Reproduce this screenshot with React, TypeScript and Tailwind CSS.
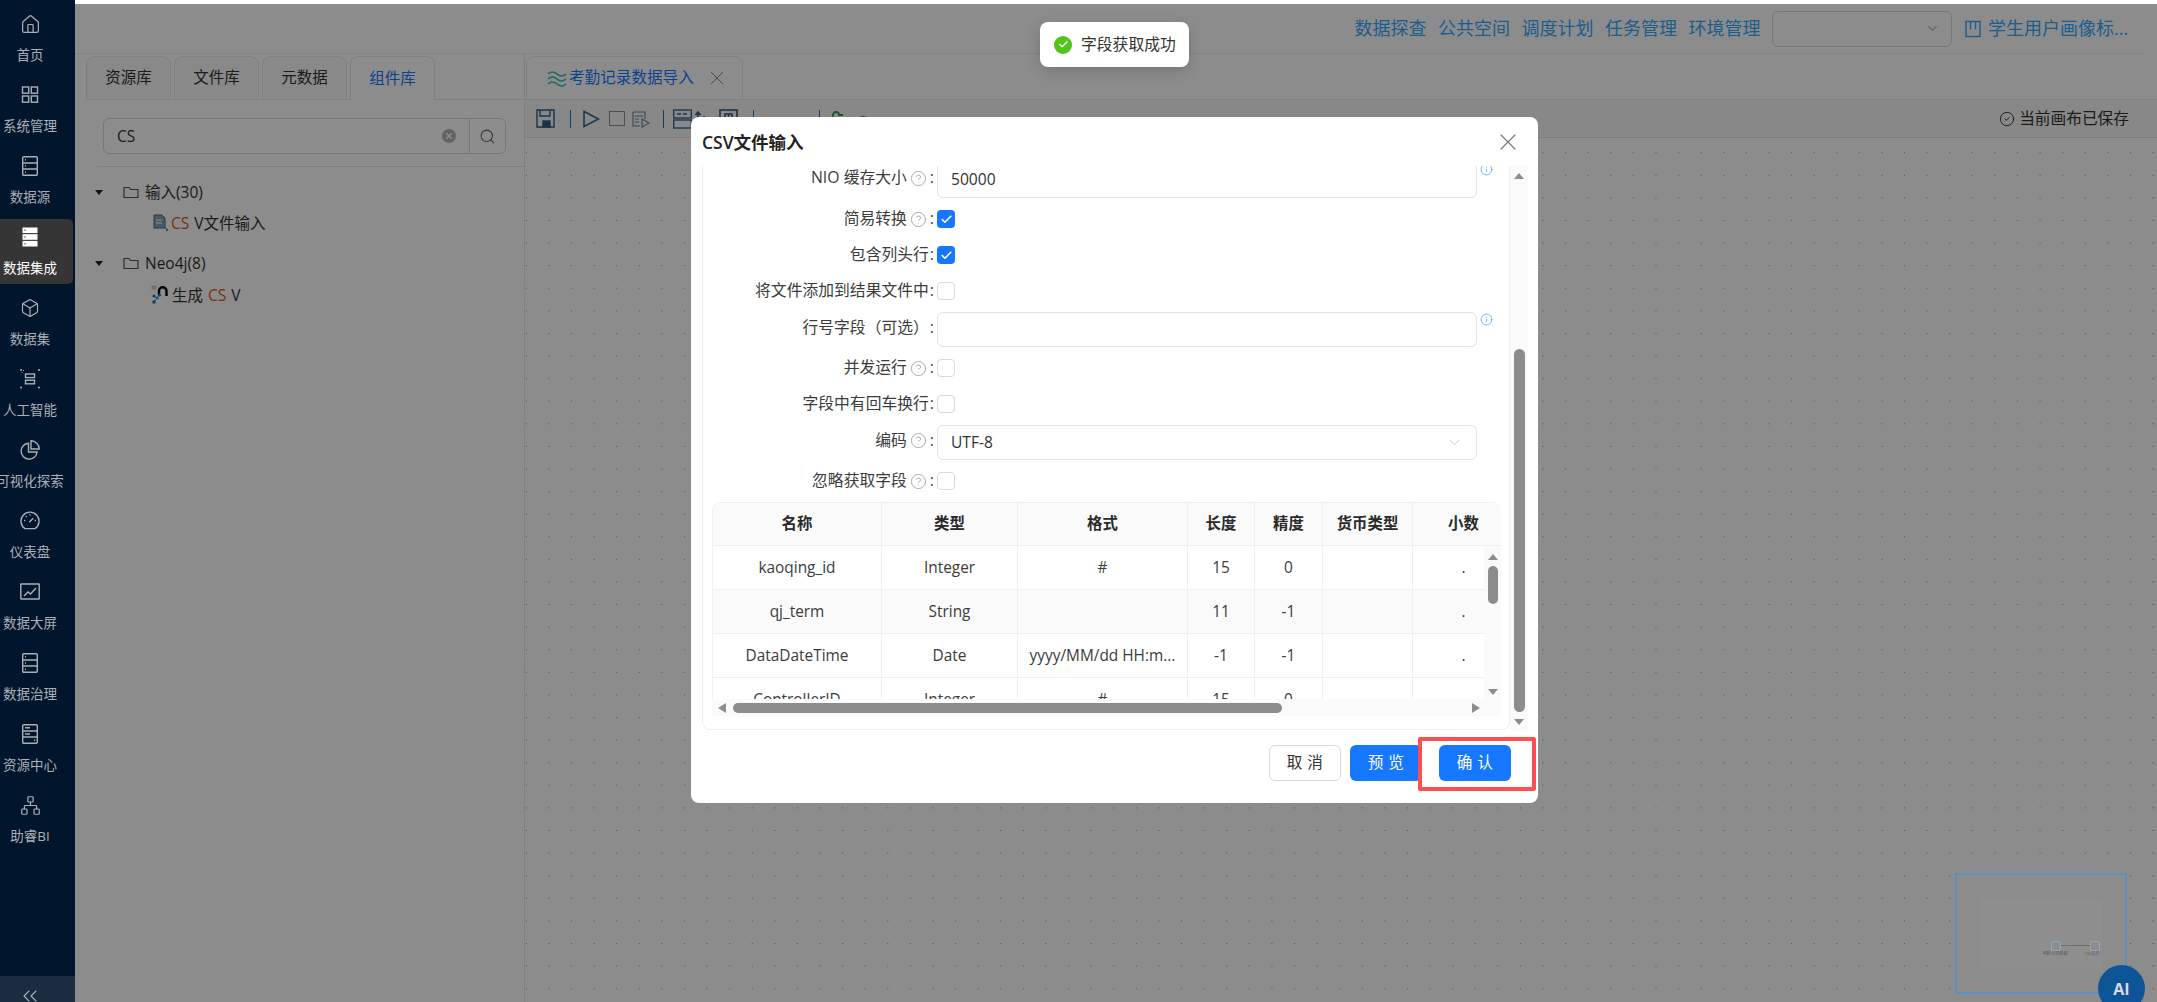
import React from "react";
import { Box, House, Network, ChevronsLeft, ChevronDown, X, Search, CircleHelp, Check, CircleCheck, Info } from "lucide-react";

const S = { fill: "none", stroke: "currentColor", strokeWidth: 1.4 } as const;

const Srv = ({ solid, alt }: { solid?: boolean; alt?: boolean }) => (
  <svg width="20" height="20" viewBox="0 0 20 20" {...S}>
    {solid ? (
      <>
        <rect x="2.5" y="0.5" width="15" height="5.6" fill="#fff" stroke="none" />
        <rect x="2.5" y="7.2" width="15" height="5.6" fill="#fff" stroke="none" />
        <rect x="2.5" y="13.9" width="15" height="5.6" fill="#fff" stroke="none" />
        <path d="M4.5 3.3h1M4.5 10h1M4.5 16.7h1" stroke="#333" />
      </>
    ) : (
      <>
        <rect x="2.7" y="0.7" width="14.6" height="18.6" rx="1" />
        <path d="M2.7 7h14.6M2.7 13h14.6" />
        {alt ? <path d="M5 3.8h5M5 10h5M14 16.2h1.2" /> : <path d="M5 3.8h1M5 10h1M5 16.2h1" />}
      </>
    )}
  </svg>
);
const Grid4 = () => (
  <svg width="20" height="20" viewBox="0 0 20 20" {...S}>
    <rect x="2.5" y="2" width="6.2" height="6.2" /><rect x="11.3" y="2" width="6.2" height="6.2" />
    <rect x="2.5" y="11" width="6.2" height="6.2" /><rect x="11.3" y="11" width="6.2" height="6.2" />
  </svg>
);
const AiIcon = () => (
  <svg width="20" height="20" viewBox="0 0 20 20" {...S}>
    <rect x="5.5" y="5" width="9" height="3.6" /><rect x="5.5" y="11.2" width="9" height="3.6" />
    <g fill="currentColor" stroke="none">
      <circle cx="1" cy="1" r="1" /><circle cx="19" cy="1" r="1" /><circle cx="1" cy="18.5" r="1" /><circle cx="19" cy="18.5" r="1" />
      <rect x="1.6" y="3" width="1" height="1" /><rect x="3" y="1" width="1" height="1" />
    </g>
  </svg>
);
const Pie = () => (
  <svg width="20" height="20" viewBox="0 0 20 20" {...S}>
    <path d="M8.5 3.2a8 8 0 1 0 8.6 8.8H8.5z" />
    <path d="M11 0.8a8.2 8.2 0 0 1 8.2 8.2H11z" />
  </svg>
);
const ChartBox = () => (
  <svg width="20" height="20" viewBox="0 0 20 20" {...S}>
    <rect x="0.8" y="2" width="18.4" height="15" rx="0.5" />
    <path d="M4 14l4-4 2.5 2L16 6" />
  </svg>
);
const Dial = () => (
  <svg width="20" height="20" viewBox="0 0 20 20" {...S}>
    <path d="M5 17.6a9 9 0 1 1 10 0z" />
    <path d="M9.2 11.2l4-4M10 3.2v1.3M4 9.5h1.3M16 9.5h-1.3M5.8 5.2l.9.9" />
  </svg>
);
const Help = () => <CircleHelp size={17} strokeWidth={1.15} className="text-[#9a9a9a] ml-[3px] mr-[2px] shrink-0" />;

const items: [React.ReactNode, string][] = [
  [<House size={21} strokeWidth={1.4} />, "首页"],
  [<Grid4 />, "系统管理"],
  [<Srv />, "数据源"],
  [<Srv solid />, "数据集成"],
  [<Box size={20} strokeWidth={1.4} />, "数据集"],
  [<AiIcon />, "人工智能"],
  [<Pie />, "可视化探索"],
  [<Dial />, "仪表盘"],
  [<ChartBox />, "数据大屏"],
  [<Srv />, "数据治理"],
  [<Srv alt />, "资源中心"],
  [<Network size={21} strokeWidth={1.4} />, "助睿BI"],
];

const Sidebar = () => (
  <aside className="w-[75px] shrink-0 h-full bg-[#01152c] flex flex-col pt-[6px] relative z-20">
    {items.map(([ic, t], i) => (
      <div
        key={t}
        className={
          i === 3
            ? "w-[73px] h-[65px] mb-[6px] rounded-r-[5px] bg-[#353535] text-white"
            : "w-[73px] h-[65px] mb-[6px] text-[#a9b0b7]"
        }
      >
        <div className="w-[60px] flex flex-col items-center pt-[8px]">
          <div className="h-[20px] flex items-center justify-center">{ic}</div>
          <div className="mt-[11px] text-[13.5px] leading-[20px] whitespace-nowrap">{t}</div>
        </div>
      </div>
    ))}
    <div className="mt-auto h-[26px] bg-[#1b2c41] text-[#a9b0b7] pl-[18px] pt-[8px] overflow-hidden">
      <ChevronsLeft size={24} strokeWidth={1.1} />
    </div>
  </aside>
);

const Tab = ({ t, on }: { t: string; on?: boolean }) => (
  <div
    className={
      on
        ? "w-[85px] h-[45px] mr-[3px] -mb-px rounded-t-[8px] border border-[#eaeaea] border-b-white bg-white text-[#1677ff] text-[15.5px] flex items-center justify-center"
        : "w-[85px] h-[44px] mr-[3px] rounded-t-[8px] border border-[#eaeaea] bg-[#fafafa] text-[#333] text-[15.5px] flex items-center justify-center"
    }
  >
    {t}
  </div>
);

const Folder = () => (
  <svg width="16" height="13" viewBox="0 0 16 13" fill="none" stroke="#555" strokeWidth="1.2">
    <path d="M1 11.5V1.5h5l1.5 2H15v8z" />
  </svg>
);
const Caret = () => <div className="w-0 h-0 border-x-[4px] border-x-transparent border-t-[5px] border-t-[#222]" />;

const LeftPanel = () => (
  <section className="w-[450px] shrink-0 border-r border-[#e8e8e8] bg-white pl-[11px] flex flex-col">
    <div className="flex pt-[2px] border-b border-[#eaeaea] h-[46px]">
      <Tab t="资源库" /><Tab t="文件库" /><Tab t="元数据" /><Tab t="组件库" on />
    </div>
    <div className="pl-[17px] pt-[18px] pr-[18px]">
      <div className="h-[36px] rounded-[6px] border border-[#d9d9d9] flex items-center text-[15.5px] text-[#333]">
        <span className="pl-[13px] flex-1 pt-[1px]">CS</span>
        <span className="w-[14px] h-[14px] rounded-full bg-[#b5b5b5] text-white flex items-center justify-center mr-[13px]">
          <X size={10} strokeWidth={3} />
        </span>
        <span className="w-[36px] h-full border-l border-[#d9d9d9] flex items-center justify-center text-[#666]">
          <Search size={17} strokeWidth={1.5} />
        </span>
      </div>
    </div>
    <div className="ml-[11px] mt-[12px] border-t border-[#e8e8e8]" />
    <div className="text-[15.5px] text-[#333] leading-[20px]">
      <div className="flex items-center h-[22px] mt-[14px] pl-[9px]">
        <Caret /><span className="ml-[20px]"><Folder /></span><span className="ml-[6px]">输入(30)</span>
      </div>
      <div className="flex items-center h-[24px] mt-[8px] pl-[66px]">
        <svg width="18" height="18" viewBox="0 0 18 18" fill="none" className="mr-[1px] shrink-0">
          <path d="M2 1h8l3 3v10H2z" fill="#8aa0b5" stroke="#3f6a90" />
          <path d="M4 6h6M4 9h6" stroke="#fff" />
          <path d="M13 14l3 2-2 1" stroke="#2a6a9a" />
        </svg>
        <span className="text-[#e0561c]">CS</span><span className="ml-[5px]">V文件输入</span>
      </div>
      <div className="flex items-center h-[22px] mt-[17px] pl-[9px]">
        <Caret /><span className="ml-[20px]"><Folder /></span><span className="ml-[6px]">Neo4j(8)</span>
      </div>
      <div className="flex items-center h-[24px] mt-[9px] pl-[65px]">
        <svg width="20" height="20" viewBox="0 0 20 20" fill="none" className="mr-[1px] shrink-0">
          <path d="M0.5 0.5h5v4h-5z" fill="#ccc" />
          <path d="M8 10V6a3.5 3.5 0 0 1 7.5 0v5" stroke="#000" strokeWidth="2.4" />
          <circle cx="8.5" cy="10" r="1.6" fill="#1677c8" />
          <circle cx="3" cy="11" r="1.6" fill="#1677c8" />
          <circle cx="3" cy="17" r="1.8" fill="#1677c8" />
          <path d="M3 17l5-7M3 11l5 3" stroke="#1677c8" />
        </svg>
        <span>生成</span><span className="ml-[5px] text-[#e0561c]">CS</span><span className="ml-[5px]">V</span>
      </div>
    </div>
  </section>
);

const Sep = ({ l, r }: { l: number; r: number }) => (
  <span className="w-px h-[18px] bg-[#1677c8] shrink-0" style={{ marginLeft: l, marginRight: r }} />
);

const Toolbar = () => (
  <div className="h-[38px] shrink-0 flex items-center pl-[11px] bg-[#f7f7f7] border-b border-[#e4e4e4] text-[#2e5f85]">
    <svg width="19" height="19" viewBox="0 0 19 19" fill="none" stroke="currentColor" strokeWidth="1.4" className="shrink-0">
      <path d="M1 1h17v17H1z" /><path d="M4 1v6h10V1" /><rect x="7" y="12" width="7" height="6" fill="currentColor" />
    </svg>
    <Sep l={15} r={11} />
    <svg width="18" height="18" viewBox="0 0 18 18" fill="none" stroke="currentColor" strokeWidth="1.5" className="shrink-0"><path d="M2 1.5L16.5 9 2 16.5z" /></svg>
    <span className="w-[16px] h-[15px] ml-[9px] border border-[#8f8f8f] shrink-0" />
    <svg width="18" height="18" viewBox="0 0 18 18" fill="none" stroke="currentColor" strokeWidth="1.2" className="ml-[7px] opacity-70 shrink-0">
      <path d="M1 2h12v7M1 2v14h7M3 6h8M3 9h4M3 12h4" /><path d="M10 9l7 4-7 4z" />
    </svg>
    <Sep l={13} r={9} />
    <svg width="19" height="20" viewBox="0 0 19 20" fill="none" stroke="currentColor" strokeWidth="1.3" className="shrink-0"><rect x="0.7" y="1" width="17.6" height="8" /><rect x="0.7" y="11" width="17.6" height="8" /><path d="M4 5h4M10 5h4" /></svg>
    <svg width="14" height="20" viewBox="0 0 14 20" fill="none" stroke="currentColor" strokeWidth="1.6" className="ml-[2px] shrink-0"><path d="M4 3v14M1.5 6L4 3l2.5 3M10 7v10" /></svg>
    <svg width="19" height="19" viewBox="0 0 19 19" fill="none" stroke="currentColor" strokeWidth="1.6" className="ml-[11px] shrink-0"><rect x="1" y="1" width="17" height="17" /><path d="M6 9V5h7v4M9.5 5v4" /></svg>
    <Sep l={15} r={8} />
    <svg width="16" height="18" viewBox="0 0 16 18" fill="none" stroke="#3c5f7c" strokeWidth="2.4" className="shrink-0"><path d="M2 13a7 7 0 0 1 12 0" /></svg>
    <svg width="16" height="18" viewBox="0 0 16 18" fill="none" stroke="#bbb" strokeWidth="2" className="ml-[11px] shrink-0"><path d="M2 13a7 7 0 0 1 12 0" /></svg>
    <Sep l={14} r={11} />
    <svg width="14" height="18" viewBox="0 0 14 18" fill="none" stroke="#2f9e5b" strokeWidth="1.8" className="shrink-0"><path d="M2 18V5a3 3 0 0 1 6 0h4" /></svg>
    <svg width="18" height="18" viewBox="0 0 18 18" fill="none" stroke="#555" strokeWidth="1.3" className="ml-[9px] shrink-0"><path d="M2 14a7 7 0 0 1 14 0" /></svg>
    <div className="flex-1" />
    <CircleCheck size={16} strokeWidth={1.4} className="text-[#333]" />
    <span className="ml-[4px] mr-[28px] text-[15.7px] text-[#333]">当前画布已保存</span>
  </div>
);

const Canvas = () => (
  <div className="flex-1 bg-white bg-[radial-gradient(circle,#999_0.6px,transparent_1px)] bg-[size:22.6px_22.6px] bg-[position:-10px_3.4px]" />
);

const Main = () => (
  <main className="flex-1 min-w-0 h-full flex flex-col bg-white pt-[4px]">
    <header className="h-[50px] shrink-0 flex items-center justify-end border-b border-[#ededed] mr-[13px] text-[#36a9ff]">
      {["数据探查", "公共空间", "调度计划", "任务管理", "环境管理"].map((t) => (
        <span key={t} className="w-[72px] mr-[11.5px] text-[18px] whitespace-nowrap">{t}</span>
      ))}
      <div className="w-[180px] h-[36px] mr-[13px] rounded-[6px] border border-[#d9d9d9] flex items-center justify-end pr-[11px]">
        <ChevronDown size={15} className="text-[#bbb]" />
      </div>
      <svg width="16" height="18" viewBox="0 0 16 18" fill="none" stroke="currentColor" strokeWidth="1.4" className="mr-[7px] shrink-0">
        <rect x="1" y="1.5" width="14" height="15" /><path d="M5.5 1.5v8M10.5 1.5v8" />
      </svg>
      <span className="w-[138px] text-[18px] mr-[18px] whitespace-nowrap">学生用户画像标...</span>
    </header>
    <div className="flex-1 min-h-0 flex">
      <LeftPanel />
      <section className="flex-1 min-w-0 flex flex-col">
        <div className="h-[46px] shrink-0 pt-[2px] pl-[1px] border-b border-[#ededed] flex">
          <div className="w-[217px] h-[44px] rounded-t-[8px] border border-[#eaeaea] bg-white flex items-center pl-[20px] text-[#1677ff]">
            <svg width="20" height="18" viewBox="0 0 20 18" fill="none" stroke="#3cc0b0" strokeWidth="1.6" className="mr-[2px]">
              <path d="M1 5q4.5-4 9 0t9 0M1 10q4.5-4 9 0t9 0M1 15q4.5-4 9 0t9 0" />
            </svg>
            <span className="text-[15.6px] whitespace-nowrap">考勤记录数据导入</span>
            <X size={24} strokeWidth={1} className="ml-[11px] text-[#888]" />
          </div>
        </div>
        <Toolbar />
        <Canvas />
      </section>
    </div>
  </main>
);

const CB = ({ on }: { on?: boolean }) => (
  <span className={on
    ? "w-[18px] h-[18px] rounded-[4px] bg-[#1677ff] text-white flex items-center justify-center"
    : "w-[18px] h-[18px] rounded-[4px] border border-[#d9d9d9] bg-white"}>
    {on && <Check size={13} strokeWidth={3} />}
  </span>
);

const Row = ({ label, help, h = 36, children, info, lift }: { label: string; help?: boolean; h?: number; children?: React.ReactNode; info?: boolean; lift?: boolean }) => (
  <div className="flex items-center shrink-0" style={{ height: h }}>
    <div className={lift ? "w-[234px] shrink-0 flex items-center justify-end text-[15.8px] text-[#3c3c3c] pb-[4px]" : "w-[234px] shrink-0 flex items-center justify-end text-[15.8px] text-[#3c3c3c]"}>
      <span className="whitespace-nowrap">{label}</span>
      {help && <Help />}
      <span className="ml-[1px] mr-[3px]">:</span>
    </div>
    {children}
    {info && <Info size={13} strokeWidth={1.5} className="self-start ml-[3px] mt-[1px] text-[#4aa5ff]" />}
  </div>
);

const Field = ({ v, sel }: { v?: string; sel?: boolean }) => (
  <div className="w-[540px] h-full rounded-[6px] border border-[#e2e2e2] flex items-center pl-[13px] pr-[13px] text-[15.6px] text-[#333]">
    <span className="flex-1">{v}</span>
    {sel && <ChevronDown size={17} strokeWidth={1.2} className="text-[#c4c4c4]" />}
  </div>
);

const cols = ["w-[169px]", "w-[136px]", "w-[170px]", "w-[67px]", "w-[68px]", "w-[90px]", "w-[102px]"];
const head = ["名称", "类型", "格式", "长度", "精度", "货币类型", "小数"];
const rows = [
  ["kaoqing_id", "Integer", "#", "15", "0", "", "."],
  ["qj_term", "String", "", "11", "-1", "", "."],
  ["DataDateTime", "Date", "yyyy/MM/dd HH:m...", "-1", "-1", "", "."],
  ["ControllerID", "Integer", "#", "15", "0", "", "."],
];

const Arrow = ({ d }: { d: "u" | "d" | "l" | "r" }) => {
  if (d === "u") return <span className="block w-0 h-0 border-x-[5px] border-x-transparent border-b-[6px] border-b-[#8c8c8c]" />;
  if (d === "d") return <span className="block w-0 h-0 border-x-[5px] border-x-transparent border-t-[6px] border-t-[#8c8c8c]" />;
  if (d === "l") return <span className="block w-0 h-0 border-y-[5px] border-y-transparent border-r-[8px] border-r-[#8c8c8c]" />;
  return <span className="block w-0 h-0 border-y-[5px] border-y-transparent border-l-[8px] border-l-[#8c8c8c]" />;
};

const Table = () => (
  <div className="w-[789px] ml-[9px] h-[214px] shrink-0 flex flex-col overflow-hidden rounded-t-[8px] text-[15.4px] text-[#3c3c3c]">
    <div className="flex h-[44px] shrink-0 bg-[#fafafa] border-b border-[#f0f0f0] border-t font-semibold text-[#2a2a2a] rounded-t-[8px] overflow-hidden">
      {head.map((t, i) => (
        <div key={t} className={`${cols[i]} shrink-0 flex items-center justify-center border-l border-[#f0f0f0]`}>{t}</div>
      ))}
    </div>
    <div className="flex h-[153px] shrink-0 overflow-hidden">
      <div className="w-[772px] shrink-0 overflow-hidden">
        {rows.map((r, ri) => (
          <div key={ri} className={ri === 1 ? "flex h-[44px] bg-[#fafafa] border-b border-[#f0f0f0]" : "flex h-[44px] border-b border-[#f0f0f0]"}>
            {r.map((c, i) => (
              <div key={i} className={`${cols[i]} shrink-0 flex items-center justify-center border-l border-[#f0f0f0] whitespace-nowrap`}>{c}</div>
            ))}
          </div>
        ))}
      </div>
      <div className="w-[17px] shrink-0 bg-[#fafafa] flex flex-col items-center pt-[8px]">
        <Arrow d="u" />
        <span className="w-[10px] h-[38px] mt-[6px] rounded-full bg-[#8c8c8c]" />
        <span className="flex-1" />
        <span className="mb-[4px]"><Arrow d="d" /></span>
      </div>
    </div>
    <div className="h-[17px] shrink-0 bg-[#fafafa] flex items-center pl-[6px]">
      <Arrow d="l" />
      <span className="w-[549px] h-[10px] ml-[7px] rounded-full bg-[#8c8c8c]" />
      <span className="ml-[190px]"><Arrow d="r" /></span>
    </div>
  </div>
);

const Dialog = () => (
  <div className="absolute left-[691px] top-[117px] w-[847px] h-[686px] rounded-[8px] bg-white z-20 flex flex-col">
    <div className="h-[49px] shrink-0 flex items-center pl-[11px] pr-[16px] justify-between">
      <span className="text-[17.5px] font-semibold text-[#222] pt-[1px]">CSV文件输入</span>
      <X size={28} strokeWidth={1} className="text-[#7d7d7d]" />
    </div>
    <div className="h-[564px] shrink-0 flex pl-[11px]">
      <div className="w-[808px] shrink-0 h-full border-l border-b border-r border-[#efefef] rounded-b-[8px] overflow-hidden flex flex-col">
        <div className="flex flex-col -mt-[4px]">
          <Row label="NIO 缓存大小" help lift info><Field v="50000" /></Row>
          <div className="h-[3px] shrink-0" />
          <Row label="简易转换" help><CB on /></Row>
          <Row label="包含列头行"><CB on /></Row>
          <Row label="将文件添加到结果文件中"><CB /></Row>
          <div className="h-[3px] shrink-0" />
          <Row label="行号字段（可选）" h={35} lift info><Field /></Row>
          <div className="h-[3px] shrink-0" />
          <Row label="并发运行" help><CB /></Row>
          <Row label="字段中有回车换行"><CB /></Row>
          <div className="h-[3px] shrink-0" />
          <Row label="编码" help h={35} lift><Field v="UTF-8" sel /></Row>
          <div className="h-[3px] shrink-0" />
          <Row label="忽略获取字段" help><CB /></Row>
          <div className="h-[3px] shrink-0" />
          <Table />
        </div>
      </div>
      <div className="w-[18px] shrink-0 bg-[#fafafa] flex flex-col items-center pt-[7px]">
        <Arrow d="u" />
        <span className="mt-[170px] w-[11px] h-[363px] rounded-full bg-[#8c8c8c]" />
        <span className="mt-[7px]"><Arrow d="d" /></span>
      </div>
    </div>
    <div className="flex-1 flex items-start justify-end pt-[15px] pr-[27px] text-[15.6px] tracking-[0.5px] relative">
      <button className="w-[72px] h-[36px] rounded-[6px] border border-[#d9d9d9] text-[#333]">取 消</button>
      <button className="w-[72px] h-[36px] ml-[9px] rounded-[6px] bg-[#1677ff] text-white">预 览</button>
      <button className="w-[72px] h-[36px] ml-[17px] rounded-[6px] bg-[#1677ff] text-white">确 认</button>
      <div className="absolute left-[727px] top-[7px] w-[118px] h-[54px] border-[4px] border-[#ff4d50] rounded-[2px]" />
    </div>
  </div>
);

const Minimap = () => (
  <div className="absolute left-[1955px] top-[873px] w-[172px] h-[121px] border-2 border-[#5f8fbf] bg-[#8c8c8c] z-[15] flex items-center justify-center">
    <div className="w-[121px] h-[69px] bg-[#8e8e8e] relative text-[4px] leading-[5px] text-[#555] whitespace-nowrap">
      <span className="absolute left-[70px] top-[42px] w-[10px] h-[10px] rounded-[2px] border border-[#8ea7c5]" />
      <span className="absolute left-[109px] top-[42px] w-[10px] h-[10px] rounded-[2px] border border-[#8ea7c5]" />
      <span className="absolute left-[80px] top-[46px] w-[29px] h-px bg-[#6f6f6f]" />
      <span className="absolute left-[62px] top-[52px]">考勤 记录数据</span>
      <span className="absolute left-[104px] top-[52px]">CSV文件</span>
    </div>
  </div>
);

export default function App() {
  return (
    <div className="relative w-[2157px] h-[1002px] overflow-hidden flex bg-white font-['Open_Sans','Noto_Sans_CJK_SC',sans-serif]">
      <Sidebar />
      <Main />
      <div className="absolute left-[75px] top-[4px] right-0 bottom-0 bg-black/45 z-10" />
      <Minimap />
      <Dialog />
      <div className="absolute left-[1040px] top-[22px] w-[149px] h-[45px] rounded-[8px] bg-white z-30 flex items-center pl-[14px] text-[15.8px] text-[#333] shadow-[0_4px_14px_rgba(0,0,0,0.15)]">
        <span className="w-[18px] h-[18px] rounded-full bg-[#52c41a] text-white flex items-center justify-center mr-[9px]">
          <Check size={11} strokeWidth={3} />
        </span>
        字段获取成功
      </div>
      <div className="absolute left-[2098px] top-[965px] w-[47px] h-[47px] rounded-full bg-[#0e5598] z-30 flex items-start justify-center pt-[12px] text-[#d5dce4] font-bold text-[16px]">AI</div>
    </div>
  );
}
